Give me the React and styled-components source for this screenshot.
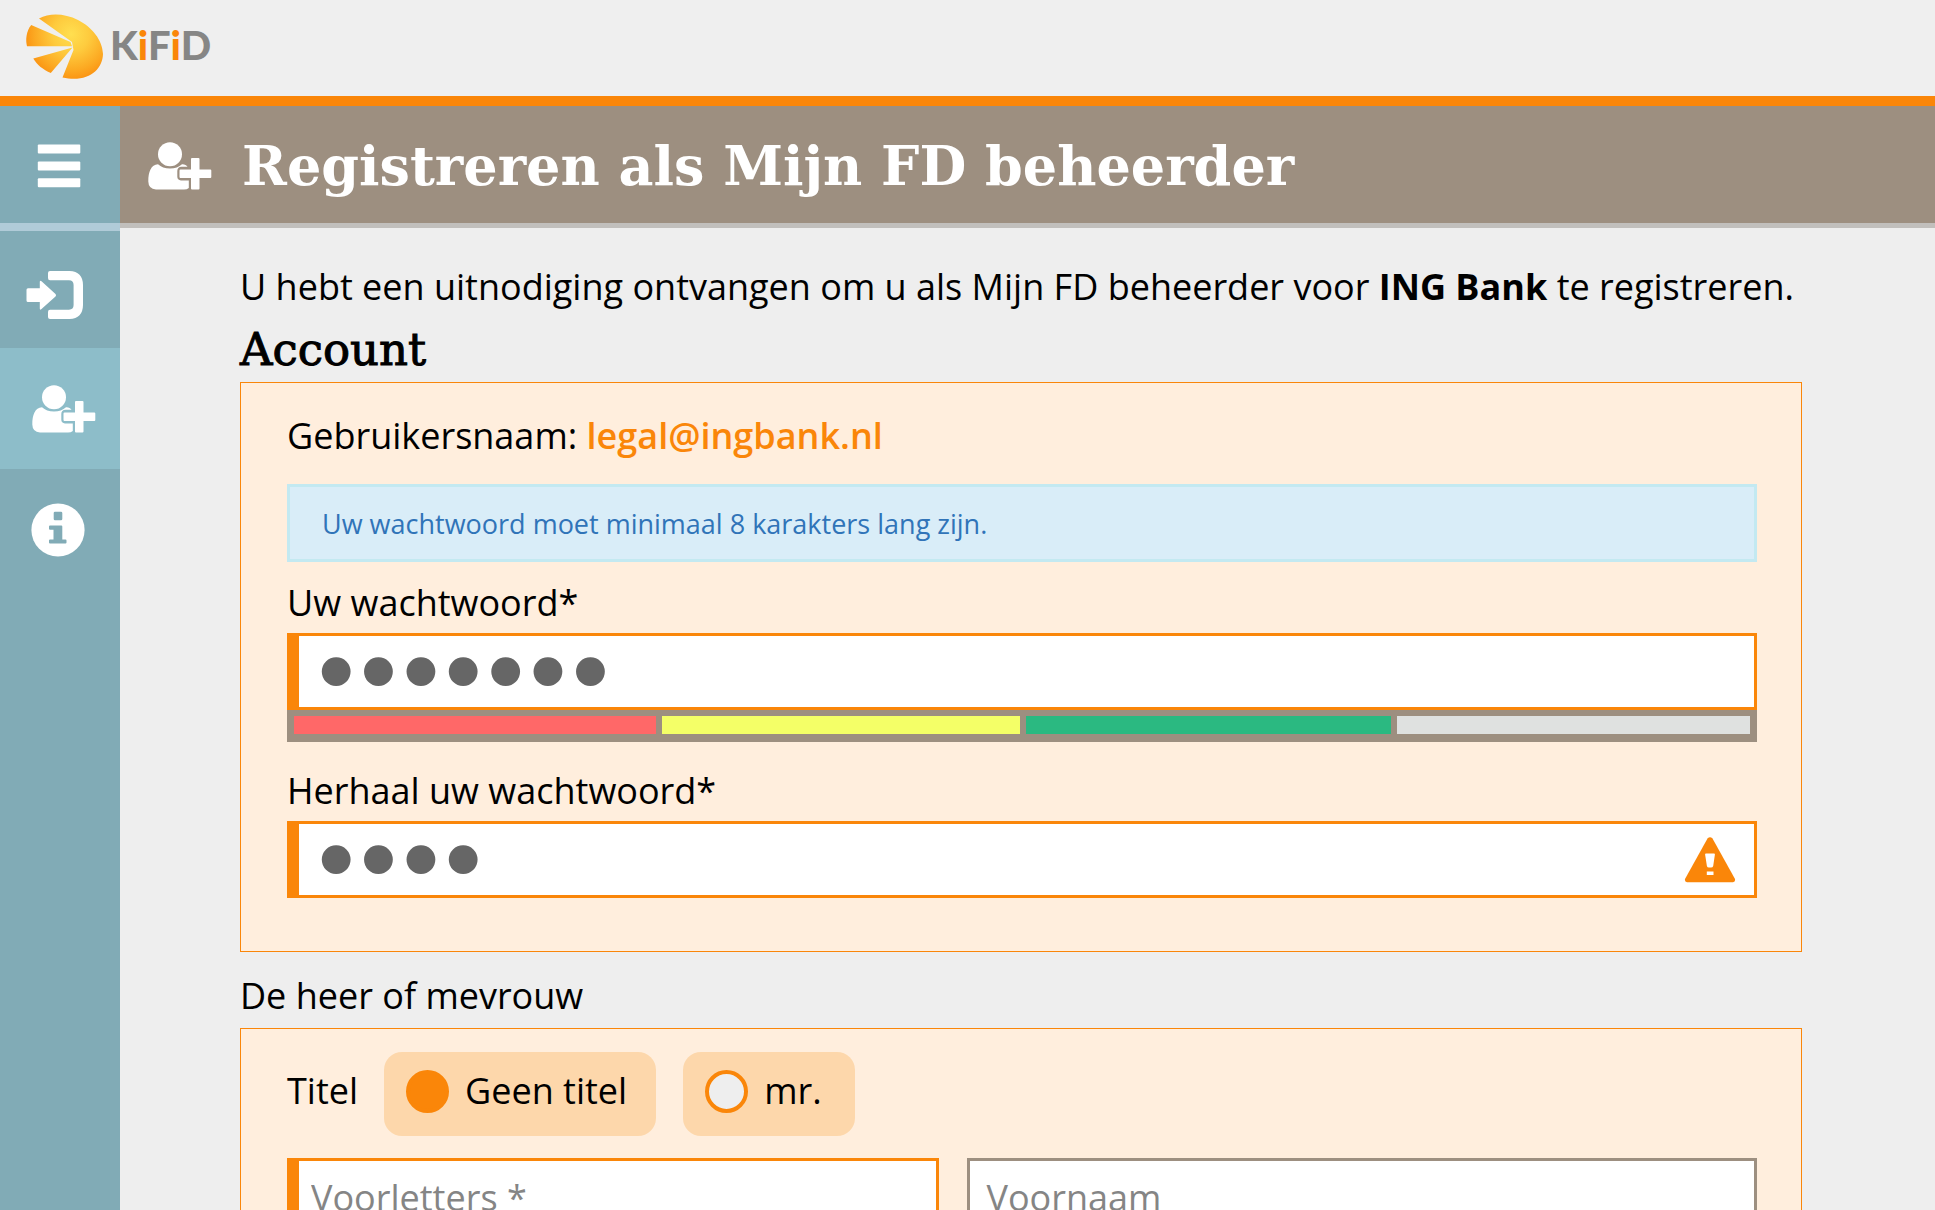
import React from "react";
import styled, { createGlobalStyle } from "styled-components";

const orange = "#fa8609";
const taupe = "#9d8f80";
const teal = "#81abb6";
const sans = '"Open Sans", "Noto Sans", sans-serif';
const slab = '"DejaVu Serif", serif';

const GlobalStyle = createGlobalStyle`
  *, *::before, *::after { box-sizing: border-box; }
  body {
    margin: 0;
    background: #eeeeee;
    color: #000000;
    font-family: ${sans};
    font-size: 36px;
    line-height: 48px;
  }
`;

const Page = styled.div`
  display: flex;
  flex-direction: column;
  min-height: 100vh;
`;

const Masthead = styled.header`
  display: flex;
  align-items: flex-start;
  height: 106px;
  padding: 12px 24px 0;
  background: #efefef;
  border-bottom: 10px solid ${orange};
`;

const LogoLink = styled.a`
  display: flex;
  align-items: flex-start;
  gap: 6px;
  text-decoration: none;
`;

const LogoText = styled.span`
  padding-top: 9px;
  font-family: Lato, ${sans};
  font-size: 40px;
  font-weight: 900;
  color: #868685;
`;

const LogoAccent = styled.span`
  color: ${orange};
`;

const Body = styled.div`
  display: flex;
  flex: 1;
`;

const Sidebar = styled.nav`
  display: flex;
  flex-direction: column;
  flex: 0 0 120px;
  background: ${teal};
`;

const MenuButton = styled.button`
  display: flex;
  align-items: center;
  height: 125px;
  padding: 2px 37px 0;
  background: ${teal};
  border: 0;
  border-bottom: 8px solid #b0cbd8;
`;

const NavLink = styled.a`
  display: flex;
  align-items: center;
  height: ${(p) => (p.$active ? 121 : 117)}px;
  padding-top: ${(p) => p.$drop || 0}px;
  padding-left: ${(p) => p.$indent}px;
  background: ${(p) => (p.$active ? "#8dbdc9" : teal)};
`;

const Content = styled.div`
  flex: 1;
  min-width: 0;
`;

const TitleBar = styled.div`
  display: flex;
  align-items: center;
  gap: 30px;
  height: 122px;
  padding: 2px 28px 0;
  background: ${taupe};
  border-bottom: 5px solid #c1bfbc;
`;

const Title = styled.h1`
  margin: 0;
  font-family: ${slab};
  font-size: 54px;
  line-height: 72px;
  font-weight: 700;
  color: #ffffff;
`;

const Main = styled.main`
  padding: 35px 133px 48px 120px;
`;

const Intro = styled.p`
  margin: 0;
`;

const Heading = styled.h2`
  margin: 0;
  padding-top: 7px;
  font-family: ${slab};
  font-size: 45px;
  line-height: 64px;
  font-weight: 400;
  -webkit-text-stroke: 1px #000000;
`;

const SubHeading = styled.h3`
  margin: 20px 0 8px;
  font-size: 36px;
  font-weight: 400;
`;

const Panel = styled.section`
  padding: ${(p) => p.$top}px 44px 53px 46px;
  background: #ffeedd;
  border: 1px solid ${orange};
`;

const UserName = styled.p`
  margin: 0 0 24px;
`;

const Account = styled.strong`
  font-weight: 600;
  color: ${orange};
`;

const Notice = styled.p`
  margin: 0 0 17px;
  padding: 13px 32px 11px;
  background: #d9edf8;
  border: 3px solid #c3e9f1;
  color: #3074b8;
  font-size: 27px;
`;

const Label = styled.label`
  display: block;
  margin-bottom: 6px;
`;

const Field = styled.div`
  display: flex;
  align-items: center;
  height: 77px;
  background: #ffffff;
  border: 3px solid ${(p) => (p.$required ? orange : taupe)};
  border-left-width: ${(p) => (p.$required ? 12 : 3)}px;
  padding-right: 18px;
`;

const PasswordInput = styled.input`
  flex: 1;
  min-width: 0;
  height: 71px;
  padding: 0 0 0 16px;
  border: 0;
  outline: 0;
  background: transparent;
  color: #666666;
  font-family: "Liberation Serif", serif;
  font-size: 121px;
  line-height: 71px;
`;

const TextInput = styled.input`
  flex: 1;
  min-width: 0;
  height: 71px;
  padding: 2px 0 0 ${(p) => (p.$required ? 12 : 16)}px;
  border: 0;
  outline: 0;
  background: transparent;
  color: #000000;
  font-family: ${sans};
  font-size: 36px;

  &::placeholder {
    color: #858585;
    opacity: 1;
  }
`;

const Strength = styled.div`
  display: flex;
  gap: 6px;
  height: 32px;
  margin-bottom: 25px;
  padding: 6px 7px 8px;
  background: ${taupe};
`;

const StrengthPart = styled.span`
  flex: ${(p) => p.$share} 1 0;
  background: ${(p) => p.$color};
`;

const RadioRow = styled.div`
  display: flex;
  align-items: flex-start;
  margin-bottom: 22px;
`;

const RowLabel = styled.span`
  padding: 15px 26px 0 0;
`;

const Choice = styled.label`
  display: flex;
  align-items: center;
  gap: 16px;
  min-width: 172px;
  margin-right: 27px;
  padding: 15px 29px 21px 22px;
  border-radius: 18px;
  background: #fdd7ab;
`;

const Radio = styled.input`
  appearance: none;
  width: 43px;
  height: 43px;
  margin: 0;
  border: 4px solid ${orange};
  border-radius: 50%;
  background: #eeeeee;

  &:checked {
    background: ${orange};
  }
`;

const NameRow = styled.div`
  display: grid;
  grid-template-columns: 652fr 789fr;
  gap: 28px;
`;

const parts = [
  { color: "#ff6868", share: 362 },
  { color: "#f4ff67", share: 357 },
  { color: "#2bb981", share: 365 },
  { color: "#dfe1e0", share: 353 },
];

function LogoMark() {
  return (
    <svg width="80" height="70" viewBox="24 12 80 70" aria-hidden="true">
      <defs>
        <radialGradient id="sun" gradientUnits="userSpaceOnUse" cx="71" cy="34" r="52">
          <stop offset="0" stopColor="#ffdf50" />
          <stop offset="0.35" stopColor="#fecb3e" />
          <stop offset="0.7" stopColor="#fca922" />
          <stop offset="1" stopColor="#fa8609" />
        </radialGradient>
      </defs>
      <g fill="url(#sun)">
        <path d="M39 18.5C50 12.500 65 13.500 78 20C92 27 102.500 40 103 54C102.500 70 88 83 62.500 77.500L73.500 50L72 42Z" />
        <path d="M31.200 25L70.500 42L72 46.200L27 46.200C25.200 39 26.500 31 31.200 25Z" />
        <path d="M33.300 58.500L72.500 47.500L50.800 73C43 69.500 37 65 33.300 58.500Z" />
      </g>
    </svg>
  );
}

function UserPlusIcon() {
  return (
    <svg width="64" height="48" viewBox="0 0 64 48" fill="#ffffff" aria-hidden="true">
      <circle cx="22" cy="12.300" r="12" />
      <path d="M10 22.200C13 25 17 26.500 22 26.500C27 26.500 31 25 34 22.200C36.500 22 38.500 23.200 39.500 24.800H33.500Q29.300 25 29.300 29V34.500Q29.300 38.200 33 38.400H40.800V46Q39 47.500 36 47.500H8Q0.500 47 0.300 39.500C0.300 30 3 22.400 10 22.200Z" />
      <path d="M44 16H50.500Q51.500 16 51.500 17V27.500H62.300Q63.300 27.500 63.300 28.500V35Q63.300 36 62.300 36H51.500V46.500Q51.500 47.500 50.500 47.500H44Q43 47.500 43 46.500V36H32.500Q31.500 36 31.500 35V28.500Q31.500 27.500 32.500 27.500H43V17Q43 16 44 16Z" />
    </svg>
  );
}

function MenuIcon() {
  return (
    <svg width="44" height="44" viewBox="0 0 44 44" fill="#ffffff" aria-hidden="true">
      <rect x="0.800" y="0.600" width="42.500" height="9" rx="1" />
      <rect x="0.800" y="17.400" width="42.500" height="9" rx="1" />
      <rect x="0.800" y="34.200" width="42.500" height="9" rx="1" />
    </svg>
  );
}

function LoginIcon() {
  return (
    <svg width="58" height="48" viewBox="0 0 58 48" fill="#ffffff" aria-hidden="true">
      <path d="M24 0H43.500Q56.800 0.500 57 14V34Q56.800 47.500 43.500 48H24Q22 48 22 46V41Q22 38.700 24 38.700H43Q47.600 38.500 47.600 34V14Q47.600 9.500 43 9.300H24Q22 9.300 22 7V2Q22 0 24 0Z" />
      <path d="M2 17.300H13.800V11Q13.800 9 15.500 10.300L29.500 23Q30.700 24.200 29.500 25.400L15.500 38Q13.800 39.500 13.800 37.500V31H2Q0.500 31 0.500 29.500V18.800Q0.500 17.300 2 17.300Z" />
    </svg>
  );
}

function InfoIcon() {
  return (
    <svg width="54" height="54" viewBox="0 0 54 54" aria-hidden="true">
      <circle cx="27" cy="27" r="26.600" fill="#ffffff" />
      <path
        fill={teal}
        d="M24 8.800H30Q31.300 8.800 31.300 10V16Q31.300 17.300 30 17.300H24Q22.700 17.300 22.700 16V10Q22.700 8.800 24 8.800ZM19 22.500H30.300Q31.300 22.500 31.300 23.500V36.500H34.500Q35.500 36.500 35.500 37.500V39.500Q35.500 40.500 34.500 40.500H19Q18 40.500 18 39.500V37.500Q18 36.500 19 36.500H22.500V26.700H19Q18 26.700 18 25.700V23.500Q18 22.500 19 22.500Z"
      />
    </svg>
  );
}

function WarningIcon() {
  return (
    <svg width="52" height="46" viewBox="0 0 52 46" role="img" aria-label="Let op">
      <path
        fill={orange}
        d="M23.500 1.500Q26 -1 28.500 1.500L51 42Q51.500 45 49 45.200H3Q0.500 45 1 42Z"
      />
      <path
        fill="#ffffff"
        d="M22 16.500H30Q31 16.500 30.900 17.500L29.200 29Q28.800 30.600 27 30.600H25Q23.200 30.600 22.900 29L21.100 17.500Q21 16.500 22 16.500ZM22.800 34.500H29.500V38H22.800Z"
      />
    </svg>
  );
}

export default function App() {
  return (
    <>
      <GlobalStyle />
      <Page>
        <Masthead>
          <LogoLink href="#home" aria-label="KiFiD">
            <LogoMark />
            <LogoText>
              K<LogoAccent>i</LogoAccent>F<LogoAccent>i</LogoAccent>D
            </LogoText>
          </LogoLink>
        </Masthead>
        <Body>
          <Sidebar>
            <MenuButton type="button" aria-label="Menu">
              <MenuIcon />
            </MenuButton>
            <NavLink href="#inloggen" aria-label="Inloggen" $indent={26} $drop={10}>
              <LoginIcon />
            </NavLink>
            <NavLink href="#registreren" aria-label="Registreren" $indent={32} $active>
              <UserPlusIcon />
            </NavLink>
            <NavLink href="#informatie" aria-label="Informatie" $indent={31} $drop={4}>
              <InfoIcon />
            </NavLink>
          </Sidebar>
          <Content>
            <TitleBar>
              <UserPlusIcon />
              <Title>Registreren als Mijn FD beheerder</Title>
            </TitleBar>
            <Main>
              <Intro>
                U hebt een uitnodiging ontvangen om u als Mijn FD beheerder voor <b>ING Bank</b> te registreren.
              </Intro>
              <Heading>Account</Heading>
              <Panel $top={29}>
                <UserName>
                  Gebruikersnaam: <Account>legal@ingbank.nl</Account>
                </UserName>
                <Notice>Uw wachtwoord moet minimaal 8 karakters lang zijn.</Notice>
                <Label htmlFor="password">Uw wachtwoord*</Label>
                <Field $required>
                  <PasswordInput id="password" type="password" defaultValue="geheim1" />
                </Field>
                <Strength>
                  {parts.map((part) => (
                    <StrengthPart key={part.color} $color={part.color} $share={part.share} />
                  ))}
                </Strength>
                <Label htmlFor="repeat">Herhaal uw wachtwoord*</Label>
                <Field $required>
                  <PasswordInput id="repeat" type="password" defaultValue="gehe" />
                  <WarningIcon />
                </Field>
              </Panel>
              <SubHeading>De heer of mevrouw</SubHeading>
              <Panel $top={23}>
                <RadioRow role="radiogroup" aria-labelledby="titel">
                  <RowLabel id="titel">Titel</RowLabel>
                  <Choice>
                    <Radio type="radio" name="titel" defaultChecked />
                    Geen titel
                  </Choice>
                  <Choice>
                    <Radio type="radio" name="titel" />
                    mr.
                  </Choice>
                </RadioRow>
                <NameRow>
                  <Field $required>
                    <TextInput $required placeholder="Voorletters *" aria-label="Voorletters" />
                  </Field>
                  <Field>
                    <TextInput placeholder="Voornaam" aria-label="Voornaam" />
                  </Field>
                </NameRow>
              </Panel>
            </Main>
          </Content>
        </Body>
      </Page>
    </>
  );
}
